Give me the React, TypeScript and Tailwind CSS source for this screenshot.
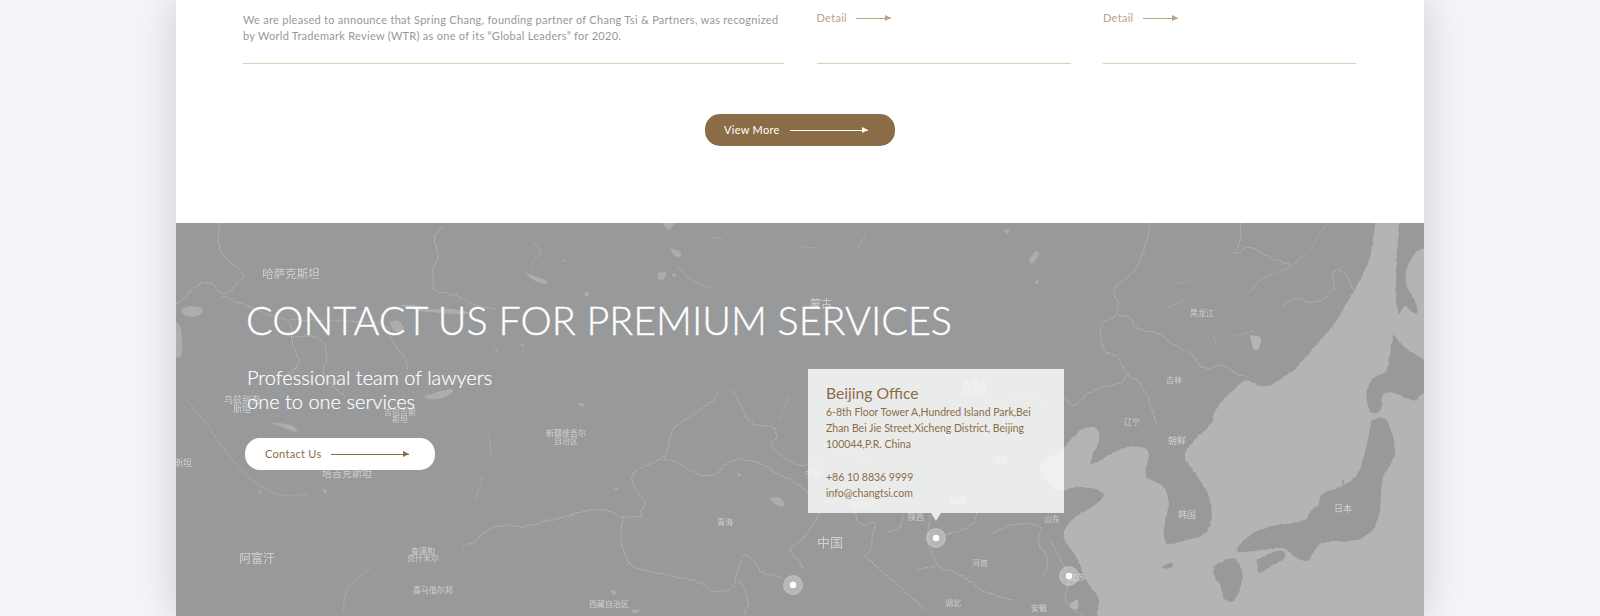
import React from 'react';

const SEA = "M975,-100 L975,10 L970,60 L960,120 L925,190 L890,250 L850,320 L800,370 L760,420 L720,460 L650,505 L610,490 L590,475 L550,510 L510,550 L490,580 L490,610 L440,650 L395,710 L430,750 L470,810 L485,850 L485,910 L460,950 L400,960 L350,980 L340,945 L345,900 L360,850 L340,790 L280,775 L295,720 L300,690 L260,675 L200,690 L130,735 L115,730 L160,640 L120,615 L75,640 L40,690 L-40,730 L-20,770 L20,820 L90,795 L175,820 L130,860 L70,890 L30,950 L70,990 L110,1090 L150,1130 L140,1188 L130,1500 L1500,1500 L1500,-100 Z";

const JAPAN = [
  "M1047,-100 L1047,10 L1040,120 L1035,200 L1045,300 L1060,250 L1105,290 L1100,250 L1065,190 L1070,140 L1100,90 L1130,85 L1300,85 L1300,-100 Z",
  "M1030,340 L1060,380 L1122,420 L1220,470 L1220,520 L1122,510 L1095,550 L1020,510 L990,530 L1000,570 L960,585 L945,520 L970,470 L1010,460 L1020,400 Z",
  "M965,600 L990,590 L1015,600 L1040,690 L1020,740 L995,770 L990,900 L950,950 L900,965 L810,965 L790,1000 L770,1030 L735,1010 L700,980 L640,990 L550,1000 L580,960 L640,920 L770,905 L775,880 L810,850 L810,820 L880,800 L930,760 L950,670 Z",
  "M620,1020 L690,985 L715,1010 L660,1040 L625,1065 Z",
  "M490,1040 L550,1005 L580,1050 L575,1100 L550,1150 L520,1140 L515,1100 L490,1070 Z",
  "M875,790 L885,770 L880,795 Z",
];

const LAKES_LEFT = [
  "M1045,148 L1080,160 L1118,175 L1110,185 L1075,175 Z",
  "M745,520 L790,505 L835,495 L825,515 L790,530 L750,528 Z",
  "M285,600 L330,600 L365,615 L360,630 L320,612 Z",
  "M20,255 L50,248 L85,258 L75,275 L40,285 L15,270 Z",
  "M-10,300 L15,300 L20,400 L5,405 L-10,395 Z",
  "M670,245 L720,245 L760,260 L830,255 L900,275 L830,272 L770,270 L700,258 Z",
  "M640,295 L670,290 L690,325 L655,332 Z",
  "M955,378 L968,380 L962,388 Z",
  "M1030,362 L1048,366 L1040,372 Z",
  "M1160,112 L1175,112 L1165,118 Z",
  "M248,800 L262,805 L250,812 Z",
  "M440,800 L455,797 L448,815 Z",
];

const LAKES_MID = [
  "M275,-5 L320,-5 L295,27 Z",
  "M300,75 L335,85 L330,105 L310,95 Z",
  "M265,150 L295,145 L280,172 L262,170 Z",
  "M305,155 L322,152 L312,165 Z",
  "M42,210 L62,205 L50,225 Z",
  "M600,825 L630,820 L650,850 L620,850 Z",
  "M1375,110 L1400,80 L1410,95 L1385,125 Z",
  "M1395,175 L1410,170 L1400,187 Z",
  "M25,540 L50,545 L30,550 Z",
  "M1300,20 L1322,18 L1310,35 Z",
  "M500,750 L518,755 L505,762 Z",
  "M130,795 L155,798 L135,802 Z",
  "M120,1100 L145,1105 L130,1120 Z",
  "M185,1160 L215,1160 L190,1175 Z",
];

const BORDERS_LEFT = [
  "M130,0 L125,70 L150,110 L205,150 L200,170 L140,220 L110,180 L75,175 L35,215 L10,240 L0,240",
  "M140,220 L230,255 L300,285 L345,290 L350,380 L375,410 L350,450 L300,470",
  "M345,290 L600,295 L640,310 L650,365 L690,400 L695,440",
  "M345,340 L440,340 L455,400 L440,450 L470,490 L510,520",
  "M800,10 L770,40 L790,100 L770,130 L770,210 L830,210 L900,250 L960,260",
  "M860,970 L900,960 L930,915 L1000,905 L1040,915 L1130,890 L1200,875",
];

const BORDERS_MID = [
  "M440,510 L435,530 L400,555 L345,590 L300,625 L295,680 L275,710 L180,745 L195,800 L230,840 L210,870 L215,880",
  "M0,875 L60,860 L110,860 L160,885 L220,880",
  "M160,885 L150,950 L170,1010 L180,1030 L260,1050 L320,1060 L400,1080 L430,1110 L490,1100 L500,1050 L520,985 L560,1020 L570,1050 L640,1065",
  "M275,710 L310,710 L370,750 L430,765 L480,705 L560,715 L620,750 L700,790 L730,830",
  "M490,500 L540,610 L610,605 L625,640 L595,665 L650,710 L700,735 L780,690 L900,700 L920,800",
  "M750,870 L700,950 L650,980 L690,1015 L700,1040",
  "M855,870 L870,910 L920,895 L905,940 L905,980 L880,1000 L910,1020 L985,1090 L1070,1160",
  "M1000,875 L990,920 L950,930",
  "M1080,880 L1070,950 L1090,1000 L1110,1040 L1170,1050 L1230,1100 L1280,1120 L1330,1130",
  "M1220,870 L1210,910 L1130,935",
  "M1270,930 L1330,900 L1420,905 L1400,960 L1440,1010 L1420,1060",
  "M1040,1040 L1100,1030",
  "M520,1180 L540,1130 L510,1070",
  "M1110,640 L1180,580 L1340,520 L1400,510 L1440,560",
];

const BORDERS_RIGHT = [
  "M300,10 L280,100 L260,150 L180,210 L210,250 L195,290 L240,285 L260,330 L320,335 L380,380 L430,405 L460,455 L520,430 L560,465 L590,470",
  "M195,290 L145,310 L160,400 L200,400 L230,465 L280,490 L320,610",
  "M230,465 L215,490 L120,510 L70,565 L45,530",
  "M910,210 L880,145 L840,160 L860,200 L820,240 L780,250 L740,230 L700,255",
  "M570,10 L575,70 L540,110 L600,75 L650,110 L720,135",
  "M0,960 L40,1030 L60,1090 L40,1150 L100,1188",
];

const RIVERS = [
  { t: "translate(1050,220) scale(0.3333)", d: "M825,15 L790,80 L720,145 L640,170 L590,225" },
  { t: "translate(1050,220) scale(0.3333)", d: "M405,240 L350,265 M490,340 L500,380 M545,350 L610,335 M380,190 L420,185" },
  { t: "translate(176,223) scale(0.3333)", d: "M1065,55 L1105,85 L1065,115 L1070,140 M30,530 L90,600 L130,660 L210,760 L300,820 L400,815 M940,630 L945,700 M500,1170 L510,1090 L590,1030 M920,760 L900,830" },
  { t: "translate(570,223) scale(0.3333)", d: "M320,130 L370,180 L430,195 M630,590 L660,520 M420,40 L460,50 M690,70 L750,75 M860,80 L890,30" },
];

// the outlines above are rough traces, this rounds them and adds a bit of coastline wobble
const trace = (d: string, amp: number, step: number) =>
  d
    .split('M')
    .filter(Boolean)
    .map((sub) => {
      const closed = sub.includes('Z');
      let pts = sub
        .replace('Z', '')
        .trim()
        .split(/\s*L\s*/)
        .map((p) => p.split(',').map(Number));
      if (closed) pts.push(pts[0]);
      for (let round = 0; round < 2; round++) {
        const next: number[][] = [pts[0]];
        for (let i = 0; i < pts.length - 1; i++) {
          const [ax, ay] = pts[i];
          const [bx, by] = pts[i + 1];
          next.push([ax * 0.75 + bx * 0.25, ay * 0.75 + by * 0.25], [ax * 0.25 + bx * 0.75, ay * 0.25 + by * 0.75]);
        }
        next.push(pts[pts.length - 1]);
        pts = next;
      }
      const out: string[] = [];
      pts.forEach(([x, y], i) => {
        if (i === 0) {
          out.push(`M${x},${y}`);
          return;
        }
        const [px, py] = pts[i - 1];
        const n = Math.max(1, Math.ceil(Math.hypot(x - px, y - py) / step));
        for (let k = 1; k <= n; k++) {
          const tx = px + ((x - px) * k) / n;
          const ty = py + ((y - py) * k) / n;
          const w = amp * Math.sin(tx * 12.9898 + ty * 78.233);
          const v = amp * Math.sin(tx * 39.346 + ty * 11.135);
          out.push(`L${(tx + w).toFixed(1)},${(ty + v).toFixed(1)}`);
        }
      });
      return out.join(' ') + (closed ? ' Z' : '');
    })
    .join(' ');

type Label = { x: number; y: number; s: number; text: string };

const LABELS: Label[] = [
  { x: 291, y: 273, s: 11.5, text: "哈萨克斯坦" },
  { x: 242, y: 399, s: 9, text: "乌兹别克" },
  { x: 242, y: 408, s: 9, text: "斯坦" },
  { x: 400, y: 411, s: 8, text: "吉尔吉斯" },
  { x: 400, y: 418, s: 8, text: "斯坦" },
  { x: 183, y: 462, s: 9, text: "斯坦" },
  { x: 347, y: 472, s: 10, text: "塔吉克斯坦" },
  { x: 566, y: 432, s: 8, text: "新疆维吾尔" },
  { x: 566, y: 440, s: 8, text: "自治区" },
  { x: 725, y: 521, s: 8, text: "青海" },
  { x: 257, y: 557, s: 12, text: "阿富汗" },
  { x: 423, y: 550, s: 8, text: "查谟和" },
  { x: 423, y: 557, s: 8, text: "克什米尔" },
  { x: 433, y: 589, s: 8, text: "喜马偕尔邦" },
  { x: 609, y: 603, s: 8, text: "西藏自治区" },
  { x: 821, y: 303, s: 11, text: "蒙古" },
  { x: 830, y: 541, s: 13, text: "中国" },
  { x: 916, y: 516, s: 8, text: "陕西" },
  { x: 1052, y: 518, s: 8, text: "山东" },
  { x: 980, y: 562, s: 8, text: "河南" },
  { x: 953, y: 602, s: 8, text: "湖北" },
  { x: 1039, y: 607, s: 8, text: "安徽" },
  { x: 1077, y: 576, s: 8, text: "江苏" },
  { x: 975, y: 382, s: 8, text: "内蒙古" },
  { x: 975, y: 390, s: 8, text: "自治区" },
  { x: 1001, y: 459, s: 8, text: "河北" },
  { x: 958, y: 499, s: 8, text: "山西" },
  { x: 813, y: 473, s: 8, text: "宁夏" },
  { x: 863, y: 504, s: 8, text: "自治区" },
  { x: 1202, y: 312, s: 8, text: "黑龙江" },
  { x: 1174, y: 379, s: 8, text: "吉林" },
  { x: 1132, y: 421, s: 8, text: "辽宁" },
  { x: 1177, y: 440, s: 9, text: "朝鲜" },
  { x: 1187, y: 514, s: 9, text: "韩国" },
  { x: 1343, y: 508, s: 9, text: "日本" },
];

const PINS = [
  { x: 936, y: 538 },
  { x: 793, y: 585 },
  { x: 1069, y: 576 },
];

const Arrow = ({ className, color }: { className: string; color: string }) => (
  <span className={`relative block h-px ${className}`} style={{ backgroundColor: color }}>
    <span
      className="absolute right-0 top-[-3px] h-0 w-0 border-y-[3.5px] border-l-[6px] border-y-transparent"
      style={{ borderLeftColor: color }}
    />
  </span>
);

const DetailLink = () => (
  <a className="flex items-center gap-[9px] pt-[4px] text-[11px] leading-4 tracking-[0.3px] text-[#b8a484]">
    Detail
    <Arrow className="w-[35px]" color="#b8a484" />
  </a>
);

const Border = ({ d }: { d: string }) => (
  <path d={trace(d, 2.2, 9)} fill="none" stroke="#d0d1d2" strokeWidth="0.8" strokeDasharray="1 1.3" vectorEffect="non-scaling-stroke" />
);

const MapBackground = () => (
  <svg className="absolute inset-0 h-full w-full blur-[0.35px]" viewBox="176 223 1248 393">
    <g transform="translate(1050,220) scale(0.3333)">
      <path d={trace(SEA, 1.8, 8)} fill="#b3b4b6" />
      {JAPAN.map((d) => (
        <path key={d} d={trace(d, 1.8, 8)} fill="#98999b" />
      ))}
      <path d={trace("M600,345 L635,350 L630,385 L610,395 Z", 1, 8)} fill="#b3b4b6" />
      <path d={trace("M335,1040 L372,1025 L368,1042 L345,1048 Z", 0.5, 8)} fill="#98999b" />
      <path d={trace("M60,1150 L85,1135 L85,1168 L65,1168 Z", 1, 8)} fill="#b3b4b6" />
      {BORDERS_RIGHT.map((d) => (
        <Border key={d} d={d} />
      ))}
    </g>
    <g transform="translate(176,223) scale(0.3333)">
      {LAKES_LEFT.map((d) => (
        <path key={d} d={trace(d, 1, 8)} fill="#acadaf" />
      ))}
      {BORDERS_LEFT.map((d) => (
        <Border key={d} d={d} />
      ))}
    </g>
    <g transform="translate(570,223) scale(0.3333)">
      {LAKES_MID.map((d) => (
        <path key={d} d={trace(d, 1, 8)} fill="#acadaf" />
      ))}
      {BORDERS_MID.map((d) => (
        <Border key={d} d={d} />
      ))}
    </g>
    {RIVERS.map((r) => (
      <g key={r.d} transform={r.t}>
        <path d={trace(r.d, 1.5, 10)} fill="none" stroke="#aeafb1" strokeWidth="0.7" vectorEffect="non-scaling-stroke" />
      </g>
    ))}
    {LABELS.map((l) => (
      <text
        key={`${l.text}${l.x}`}
        x={l.x}
        y={l.y}
        fontSize={l.s}
        fill="#cfd0d1"
        textAnchor="middle"
        dominantBaseline="central"
        fontFamily="'Noto Sans CJK SC', sans-serif"
      >
        {l.text}
      </text>
    ))}
    <circle cx="460.5" cy="403" r="1.3" fill="#b39a72" />
    {PINS.map((p) => (
      <g key={p.x}>
        <circle cx={p.x} cy={p.y} r="9.5" fill="#ffffff" fillOpacity="0.3" stroke="#ffffff" strokeOpacity="0.25" />
        <circle cx={p.x} cy={p.y} r="3.2" fill="#ffffff" />
      </g>
    ))}
  </svg>
);

export default function App() {
  return (
    <div className="h-[616px] overflow-hidden bg-[#f3f5f8] font-['Lato',sans-serif]">
      <div className="mx-auto w-[1248px] shadow-[0_0_40px_rgba(0,0,0,0.17)]">
        <section className="h-[223px] bg-white px-[67px]">
          <div className="grid grid-cols-[541px_254px_253px] gap-x-[32.5px]">
            <div className="h-[64px] border-b border-[#e0cdb4] pt-[12px]">
              <p className="whitespace-nowrap text-[11px] leading-4 tracking-[0.28px] text-[#97989a]">
                We are pleased to announce that Spring Chang, founding partner of Chang Tsi &amp; Partners, was recognized
                <br />
                by World Trademark Review (WTR) as one of its “Global Leaders” for 2020.
              </p>
            </div>
            <div className="h-[64px] border-b border-[#e0cdb4] pt-[6px]">
              <DetailLink />
            </div>
            <div className="h-[64px] border-b border-[#e0cdb4] pt-[6px]">
              <DetailLink />
            </div>
          </div>
          <a className="mx-auto mt-[50px] flex h-8 w-[190px] items-center gap-[10px] rounded-[15px] bg-[#8a6d46] pl-[19px] text-[11px] tracking-[0.3px] text-white">
            View More
            <Arrow className="w-[78px]" color="#ffffff" />
          </a>
        </section>

        <section className="relative h-[393px] overflow-hidden bg-[#98999b]">
          <MapBackground />
          <div className="relative pl-[70px] pt-[74px]">
            <h2 className="text-[39.5px] font-light leading-[46px] text-white [-webkit-text-stroke:0.35px_white]">CONTACT US FOR PREMIUM SERVICES</h2>
            <p className="ml-px mt-[22px] text-[20px] font-light leading-[24px] text-white [-webkit-text-stroke:0.2px_white]">
              Professional team of lawyers
              <br />
              one to one services
            </p>
            <a className="-ml-px mt-[25px] flex h-8 w-[190px] items-center gap-[9px] rounded-[15px] bg-white pl-[20px] text-[11px] tracking-[0.3px] text-[#8a6d46]">
              Contact Us
              <Arrow className="w-[78px]" color="#8a6d46" />
            </a>
          </div>

          <div className="absolute left-[632px] top-[146px] h-[144px] w-[256px] bg-white/80 px-[18px] pt-[14px] text-[#8a6d46]">
            <h3 className="text-[15.7px] leading-[20px]">Beijing Office</h3>
            <p className="mt-[1px] text-[10.5px] leading-4">
              6-8th Floor Tower A,Hundred Island Park,Bei Zhan Bei Jie Street,Xicheng District, Beijing 100044,P.R. China
            </p>
            <p className="mt-[17px] text-[10.5px] leading-4">+86 10 8836 9999</p>
            <p className="text-[10.5px] leading-4">info@changtsi.com</p>
            <span className="absolute left-[123px] top-full h-0 w-0 border-x-[5px] border-t-[8px] border-x-transparent border-t-white/80" />
          </div>
        </section>
      </div>
    </div>
  );
}
